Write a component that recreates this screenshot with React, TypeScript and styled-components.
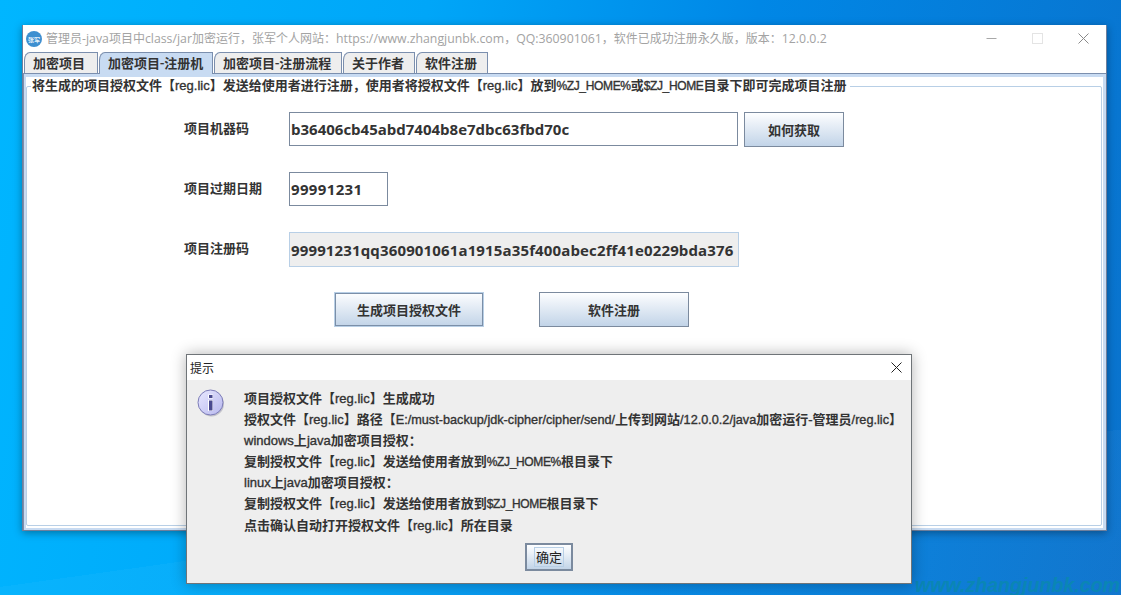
import React from "react";
import styled, { createGlobalStyle } from "styled-components";

const Global = createGlobalStyle`
  html, body { margin: 0; padding: 0; }
  * { box-sizing: border-box; }
  body { font-family: "Liberation Sans", "Noto Sans CJK SC", sans-serif; }
`;

const Desktop = styled.div`
  position: relative;
  width: 1121px;
  height: 595px;
  overflow: hidden;
  background:
    linear-gradient(172deg, transparent 0 78%, rgba(255,255,255,0.03) 78% 100%),
    linear-gradient(100deg, #00b6ff 0%, #00a6f8 35%, #0087e6 62%, #0a72cc 100%);
`;

const Watermark = styled.div`
  position: absolute;
  left: 915px;
  top: 574px;
  font: italic 700 19.6px "Liberation Sans", sans-serif;
  white-space: nowrap;
  color: #0a86b4;
`;

const AppWindow = styled.div`
  position: absolute;
  left: 22px;
  top: 25px;
  width: 1085px;
  height: 506px;
  background: #fff;
  border: 1px solid #6f7f9c;
  border-top: none;
  box-shadow: 0 2px 8px rgba(0, 0, 0, 0.35);
  display: flex;
  flex-direction: column;
`;

const TitleBar = styled.div`
  height: 27px;
  flex: none;
  display: flex;
  align-items: center;
  padding-left: 3px;
  gap: 4px;
  font-size: 12px;
  color: #a3a3a3;
`;

const TitleText = styled.span`
  font-family: "Open Sans", "Noto Sans CJK SC", sans-serif;
  flex: 1;
  white-space: nowrap;
  padding-bottom: 2px;
`;

const TitleLatin = styled.span`
  font-size: 12.3px;
`;

const WinControls = styled.div`
  display: flex;
  align-items: center;
`;

const WinControl = styled.div`
  width: 46px;
  height: 27px;
  display: flex;
  align-items: center;
  justify-content: center;
`;

const TabStrip = styled.div`
  height: 21px;
  flex: none;
  display: flex;
  align-items: flex-start;
  padding-left: 1px;
  gap: 1px;
`;

const Tab = styled.div<{ $w: number; $active?: boolean }>`
  width: ${(p) => p.$w}px;
  height: ${(p) => (p.$active ? 22 : 21)}px;
  position: relative;
  z-index: ${(p) => (p.$active ? 1 : 0)};
  background: ${(p) => (p.$active ? "#c8dbf2" : "#eeeeee")};
  border: 1px solid #7b8fae;
  border-bottom: none;
  border-top-left-radius: 6px 8px;
  font-size: 13px;
  font-weight: 700;
  color: #333;
  display: flex;
  align-items: center;
  padding: 0 0 ${(p) => (p.$active ? 3 : 2)}px 8px;
  white-space: nowrap;
`;

const Panel = styled.div`
  flex: 1;
  min-height: 0;
  border: 1px solid #7b8fae;
  border-width: 1px 0 0 1px;
  padding: 3px 3px 2px 2px;
  background: #c8dbf2;
  display: flex;
`;

const PanelInner = styled.div`
  flex: 1;
  min-width: 0;
  background: #fff;
  padding: 0 1px 2px 0;
  display: flex;
`;

const Group = styled.fieldset`
  flex: 1;
  min-width: 0;
  margin: 0;
  padding: 0;
  border: 1px solid #b8cfe6;
  border-radius: 2px;
`;

const Legend = styled.legend`
  margin-left: 4px;
  padding: 0 3px 0 1px;
  font-size: 13px;
  font-weight: 700;
  color: #333;
  line-height: 18px;
  white-space: nowrap;
`;

const Form = styled.div`
  display: flex;
  flex-direction: column;
  padding: 17px 0 0 157px;
`;

const Row = styled.div<{ $gap: number }>`
  display: flex;
  align-items: flex-start;
  margin-bottom: ${(p) => p.$gap}px;
`;

const Label = styled.label`
  width: 105px;
  height: 34px;
  flex: none;
  display: flex;
  align-items: center;
  padding-bottom: 3px;
  font-size: 13px;
  font-weight: 700;
  color: #333;
`;

const Field = styled.div<{ $w: number; $readonly?: boolean; $track?: number }>`
  width: ${(p) => p.$w}px;
  height: ${(p) => (p.$readonly ? 35 : 34)}px;
  margin-right: 6px;
  border: 1px solid ${(p) => (p.$readonly ? "#b8cfe6" : "#7b8a9e")};
  background: ${(p) => (p.$readonly ? "#eeeeee" : "#fff")};
  padding-left: 1px;
  display: flex;
  align-items: center;
  font: 700 15px "Open Sans", sans-serif;
  letter-spacing: ${(p) => p.$track ?? 0}px;
  color: #333;
  white-space: nowrap;
`;

const Button = styled.div<{ $w: number; $focus?: boolean }>`
  width: ${(p) => p.$w}px;
  height: 35px;
  border: 1px solid ${(p) => (p.$focus ? "#b8cfe6" : "#7b8a9e")};
  background: linear-gradient(#fdfeff 0%, #eef3f9 25%, #c2d4e8 100%);
  box-shadow: ${(p) => (p.$focus ? "inset 0 0 0 1px #7b8fa8" : "none")};
  font-size: 13px;
  font-weight: 700;
  color: #333;
  display: flex;
  align-items: center;
  justify-content: center;
  padding-bottom: 1px;
  white-space: nowrap;
`;

const Actions = styled.div`
  display: flex;
  gap: 55px;
  padding-left: 150px;
`;

const Dialog = styled.div`
  position: absolute;
  left: 186px;
  top: 354px;
  width: 726px;
  height: 230px;
  background: #eeeeee;
  border: 1px solid #6f7478;
  box-shadow: 0 0 14px rgba(0, 0, 0, 0.3);
  display: flex;
  flex-direction: column;
`;

const DialogTitle = styled.div`
  height: 25px;
  flex: none;
  background: #fff;
  display: flex;
  align-items: center;
  justify-content: space-between;
  padding: 0 9px 0 3px;
  font-size: 12px;
  color: #222;
`;

const DialogBody = styled.div`
  flex: 1;
  display: flex;
  padding: 8px 0 0 10px;
  gap: 19px;
`;

const DialogIcon = styled.svg`
  margin-top: 1px;
  flex: none;
`;

const Message = styled.div`
  font-size: 13px;
  font-weight: 700;
  color: #333;
  line-height: 21.1px;
  white-space: nowrap;
`;

const OkRow = styled.div`
  position: absolute;
  left: 338px;
  top: 188px;
`;

const OkButton = styled.div`
  width: 48px;
  height: 28px;
  border: 2px solid #7b8a9e;
  background: linear-gradient(#fdfeff 0%, #eef3f9 30%, #c2d4e8 100%);
  font-size: 13px;
  color: #222;
  display: flex;
  align-items: center;
  justify-content: center;
`;

const OkLabel = styled.span`
  border: 1px solid #b8cfe6;
  padding: 1px 1px 0;
  line-height: 18px;
  height: 20px;
`;

const Latin = styled.span<{ $kind: "plain" | "long" | "caps" }>`
  font-weight: 400;
  line-height: 1;
  -webkit-text-stroke: 0.35px currentColor;
  font-size: ${(p) => (p.$kind === "caps" ? 12 : p.$kind === "long" ? 12.7 : 13)}px;
  letter-spacing: ${(p) => (p.$kind === "caps" ? -0.35 : 0)}px;
`;

const parts = (s: string) => s.split(/([\x20-\x7e]+)/).filter(Boolean);
const isLatin = (p: string) => /^[\x20-\x7e]/.test(p);
const kindOf = (p: string) => (p.includes("ZJ") ? "caps" : p.length > 7 ? "long" : "plain");

const Mixed = ({ text }: { text: string }) => (
  <>
    {parts(text).map((p, i) =>
      isLatin(p) ? <Latin key={i} $kind={kindOf(p)}>{p}</Latin> : <React.Fragment key={i}>{p}</React.Fragment>
    )}
  </>
);

const TitleMixed = ({ text }: { text: string }) => (
  <>
    {parts(text).map((p, i) =>
      isLatin(p) ? <TitleLatin key={i}>{p}</TitleLatin> : <React.Fragment key={i}>{p}</React.Fragment>
    )}
  </>
);

const LOGO = "张军";

const MESSAGE_LINES = [
  "项目授权文件【reg.lic】生成成功",
  "授权文件【reg.lic】路径【E:/must-backup/jdk-cipher/cipher/send/上传到网站/12.0.0.2/java加密运行-管理员/reg.lic】",
  "windows上java加密项目授权：",
  "复制授权文件【reg.lic】发送给使用者放到%ZJ_HOME%根目录下",
  "linux上java加密项目授权：",
  "复制授权文件【reg.lic】发送给使用者放到$ZJ_HOME根目录下",
  "点击确认自动打开授权文件【reg.lic】所在目录",
];

export default function App() {
  return (
    <Desktop>
      <Global />
      <Watermark>www.zhangjunbk.com</Watermark>
      <AppWindow>
        <TitleBar>
          <svg width="16" height="16" viewBox="0 0 16 16">
            <circle cx="8" cy="8" r="8" fill="#3d8fd0" />
            <text x="8" y="10.5" fontSize="6" fontWeight="700" fill="#e6f2fb" textAnchor="middle" fontFamily="Noto Sans CJK SC">{LOGO}</text>
          </svg>
          <TitleText>
            <TitleMixed text="管理员-java项目中class/jar加密运行，张军个人网站：https://www.zhangjunbk.com，QQ:360901061，软件已成功注册永久版，版本：12.0.0.2" />
          </TitleText>
          <WinControls>
            <WinControl>
              <svg width="11" height="11" viewBox="0 0 11 11"><path d="M0.5 5.5h10" stroke="#a8a8a8" fill="none" /></svg>
            </WinControl>
            <WinControl>
              <svg width="11" height="11" viewBox="0 0 11 11"><rect x="0.5" y="0.5" width="10" height="10" stroke="#e4e4e4" fill="none" /></svg>
            </WinControl>
            <WinControl>
              <svg width="11" height="11" viewBox="0 0 11 11"><path d="M0.5 0.5l10 10M10.5 0.5l-10 10" stroke="#8a8a8a" fill="none" /></svg>
            </WinControl>
          </WinControls>
        </TitleBar>
        <TabStrip>
          <Tab $w={74}>加密项目</Tab>
          <Tab $w={114} $active><Mixed text="加密项目-注册机" /></Tab>
          <Tab $w={128}><Mixed text="加密项目-注册流程" /></Tab>
          <Tab $w={72}>关于作者</Tab>
          <Tab $w={72}>软件注册</Tab>
        </TabStrip>
        <Panel>
          <PanelInner>
            <Group>
              <Legend>
                <Mixed text="将生成的项目授权文件【reg.lic】发送给使用者进行注册，使用者将授权文件【reg.lic】放到%ZJ_HOME%或$ZJ_HOME目录下即可完成项目注册" />
              </Legend>
              <Form>
                <Row $gap={25}>
                  <Label>项目机器码</Label>
                  <Field $w={449}>b36406cb45abd7404b8e7dbc63fbd70c</Field>
                  <Button $w={100}>如何获取</Button>
                </Row>
                <Row $gap={26}>
                  <Label>项目过期日期</Label>
                  <Field $w={99} $track={0.35}>99991231</Field>
                </Row>
                <Row $gap={25}>
                  <Label>项目注册码</Label>
                  <Field $w={450} $readonly $track={0.14}>99991231qq360901061a1915a35f400abec2ff41e0229bda376</Field>
                </Row>
                <Actions>
                  <Button $w={150} $focus>生成项目授权文件</Button>
                  <Button $w={150}>软件注册</Button>
                </Actions>
              </Form>
            </Group>
          </PanelInner>
        </Panel>
      </AppWindow>
      <Dialog>
        <DialogTitle>
          提示
          <svg width="11" height="11" viewBox="0 0 11 11"><path d="M0.5 0.5l10 10M10.5 0.5l-10 10" stroke="#222" fill="none" /></svg>
        </DialogTitle>
        <DialogBody>
          <DialogIcon width="28" height="28" viewBox="0 0 28 28">
            <defs>
              <linearGradient id="inf" x1="0" y1="0" x2="1" y2="1">
                <stop offset="0" stopColor="#e8e8ff" />
                <stop offset="1" stopColor="#b8b8ee" />
              </linearGradient>
            </defs>
            <circle cx="14.5" cy="15" r="12.5" fill="#9a9aa8" opacity="0.5" />
            <circle cx="13.5" cy="13.5" r="12.5" fill="url(#inf)" stroke="#7c7cb8" />
            <rect x="11" y="5.5" width="5" height="4" fill="#fff" />
            <rect x="12" y="6" width="3.5" height="3" fill="#4a4a90" />
            <rect x="11" y="11" width="5" height="11" fill="#fff" />
            <rect x="12" y="11.5" width="3.5" height="10" fill="#4a4a90" />
          </DialogIcon>
          <Message>
            {MESSAGE_LINES.map((line) => (
              <div key={line}><Mixed text={line} /></div>
            ))}
          </Message>
        </DialogBody>
        <OkRow>
          <OkButton><OkLabel>确定</OkLabel></OkButton>
        </OkRow>
      </Dialog>
    </Desktop>
  );
}
